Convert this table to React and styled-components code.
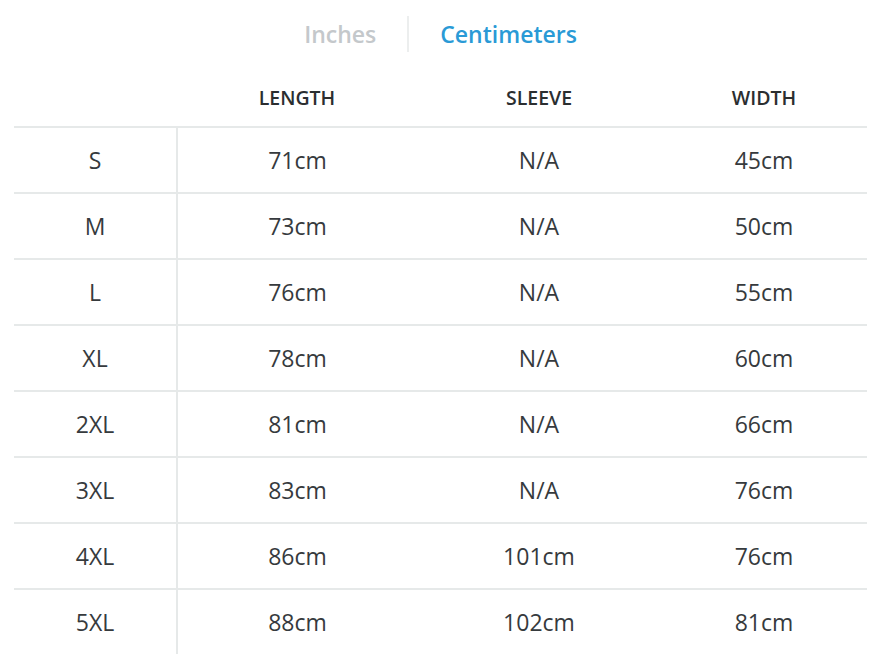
import React, { useState } from 'react';
import styled, { createGlobalStyle } from 'styled-components';

const GlobalStyle = createGlobalStyle`
  body{
    margin:0;
    background:#fff;
    font-family:"Open Sans", "Liberation Sans", sans-serif;
    color:#333;
  }
`;

const Wrapper = styled.div`
  padding:0 27px 0 14px;
`;

const Tabs = styled.div`
  display:flex;
  justify-content:center;
  align-items:center;
  height:68px;
`;

const Tab = styled.button`
  border:none;
  background:none;
  padding:0 31px;
  font-family:inherit;
  font-size:23px;
  font-weight:600;
  line-height:36px;
  color:${props => (props.$active ? '#2a9ad6' : '#c4c8cb')};
  cursor:pointer;
  & + &{
    border-left:2px solid #eceeee;
  }
`;

const Table = styled.table`
  width:100%;
  border-collapse:collapse;
  table-layout:fixed;
`;

const Col = styled.col`
  width:${props => props.$width || 'auto'};
`;

const HeadCell = styled.th`
  height:58px;
  padding:0;
  font-size:19.5px;
  font-weight:600;
  color:#2b2e30;
  text-transform:uppercase;
  text-align:center;
`;

const Cell = styled.td`
  height:64px;
  padding:0;
  font-size:23px;
  text-align:center;
  color:#363a3d;
  border-top:2px solid #e6e9e9;
  border-right:${props => (props.$size ? '2px solid #e6e9e9' : 'none')};
`;

const sizes = [
  ['S', '71cm', 'N/A', '45cm'],
  ['M', '73cm', 'N/A', '50cm'],
  ['L', '76cm', 'N/A', '55cm'],
  ['XL', '78cm', 'N/A', '60cm'],
  ['2XL', '81cm', 'N/A', '66cm'],
  ['3XL', '83cm', 'N/A', '76cm'],
  ['4XL', '86cm', '101cm', '76cm'],
  ['5XL', '88cm', '102cm', '81cm'],
];

const App = () => {
  const [unit, setUnit] = useState('cm');
  return (
    <Wrapper>
      <GlobalStyle />
      <Tabs>
        <Tab $active={unit === 'in'} onClick={() => setUnit('in')}>Inches</Tab>
        <Tab $active={unit === 'cm'} onClick={() => setUnit('cm')}>Centimeters</Tab>
      </Tabs>
      <Table>
        <colgroup>
          <Col $width="163px" />
          <Col $width="240px" />
          <Col $width="244px" />
          <Col />
        </colgroup>
        <thead>
          <tr>
            <HeadCell></HeadCell>
            <HeadCell>Length</HeadCell>
            <HeadCell>Sleeve</HeadCell>
            <HeadCell>Width</HeadCell>
          </tr>
        </thead>
        <tbody>
          {sizes.map(row => (
            <tr key={row[0]}>
              {row.map((cell, i) => <Cell key={i} $size={i === 0}>{cell}</Cell>)}
            </tr>
          ))}
        </tbody>
      </Table>
    </Wrapper>
  );
};

export default App;
